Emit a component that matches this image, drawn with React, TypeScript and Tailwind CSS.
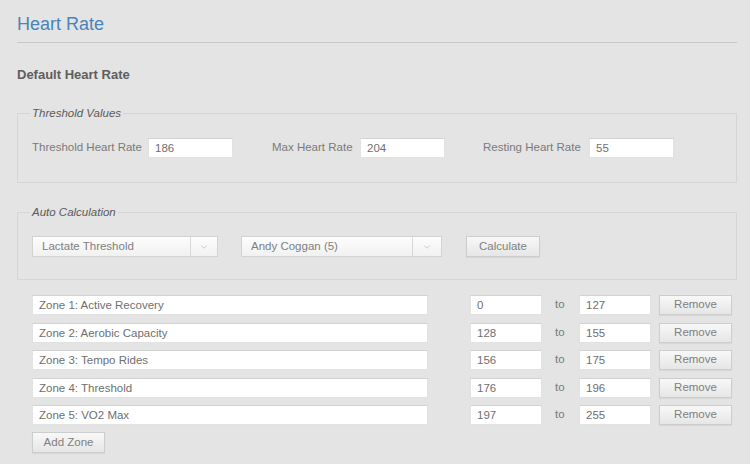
import { ChevronDown } from "lucide-react";

const zones = [
    { name: "Zone 1: Active Recovery", low: "0", high: "127" },
    { name: "Zone 2: Aerobic Capacity", low: "128", high: "155" },
    { name: "Zone 3: Tempo Rides", low: "156", high: "175" },
    { name: "Zone 4: Threshold", low: "176", high: "196" },
    { name: "Zone 5: VO2 Max", low: "197", high: "255" },
];

const inputCls =
    "h-[20px] border border-[#e2e2e2] border-t-[#d2d2d2] bg-white px-[6px] text-[11.5px] text-[#6f6f6f] outline-none";

const buttonCls =
    "flex items-center justify-center border border-[#cdcdcd] bg-gradient-to-b from-[#f8f8f8] to-[#e6e6e6] text-[11.5px] text-[#808080] shadow-[0_1px_1px_rgba(0,0,0,0.05)]";

function Field({ label, value, labelWidth }: { label: string; value: string; labelWidth: string }) {
    return (
        <div className="flex items-center">
            <span className={`${labelWidth} text-[11.5px] text-[#7a7a7a]`}>{label}</span>
            <input className={`${inputCls} w-[85px]`} defaultValue={value} />
        </div>
    );
}

function Select({ value, width, dividerAt }: { value: string; width: string; dividerAt: string }) {
    return (
        <div className={`flex h-[21px] ${width} border border-[#d3d3d3] bg-gradient-to-b from-[#fdfdfd] to-[#f1f1f1]`}>
            <div className={`flex ${dividerAt} items-center border-r border-[#d8d8d8] pl-[9px] text-[11.5px] text-[#808080]`}>
                {value}
            </div>
            <div className="flex flex-1 items-center justify-center">
                <ChevronDown size={10} strokeWidth={1.5} color="#b0b0b0" />
            </div>
        </div>
    );
}

export default function App() {
    return (
        <div
            className="h-[464px] w-full overflow-hidden bg-[#e4e4e4] pr-[13px] pl-[17px]"
            style={{ fontFamily: '"Liberation Sans", Arial, sans-serif' }}
        >
            <div className="border-b border-[#c8c8c8] pt-[13px] pb-[7px]">
                <h1 className="text-[18px] leading-[22px] text-[#4785ba]">Heart Rate</h1>
            </div>

            <h2 className="mt-[24px] text-[13px] leading-[16px] font-bold text-[#5e5e5e]">Default Heart Rate</h2>

            <fieldset className="mt-[23px] w-[720px] border border-[#d5d5d5] px-[14px] pb-[24px]">
                <legend className="-ml-[2px] px-[2px] text-[11.5px] leading-[14px] text-[#5a5a5a] italic">
                    Threshold Values
                </legend>
                <div className="mt-[18px] flex items-center">
                    <Field label="Threshold Heart Rate" value="186" labelWidth="w-[116px]" />
                    <div className="ml-[39px]">
                        <Field label="Max Heart Rate" value="204" labelWidth="w-[88px]" />
                    </div>
                    <div className="ml-[38px]">
                        <Field label="Resting Heart Rate" value="55" labelWidth="w-[106px]" />
                    </div>
                </div>
            </fieldset>

            <fieldset className="mt-[22px] w-[720px] border border-[#d5d5d5] px-[14px] pb-[22px]">
                <legend className="-ml-[2px] px-[2px] text-[11.5px] leading-[14px] text-[#5a5a5a] italic">
                    Auto Calculation
                </legend>
                <div className="mt-[17px] flex items-center">
                    <Select value="Lactate Threshold" width="w-[186px]" dividerAt="w-[158px]" />
                    <div className="ml-[23px]">
                        <Select value="Andy Coggan (5)" width="w-[201px]" dividerAt="w-[171px]" />
                    </div>
                    <button className={`${buttonCls} ml-[24px] h-[21px] w-[74px]`}>Calculate</button>
                </div>
            </fieldset>

            <div className="mt-[15px] flex flex-col gap-[7.5px] pl-[15px]">
                {zones.map((zone) => (
                    <div key={zone.name} className="flex items-center">
                        <input className={`${inputCls} w-[396px]`} defaultValue={zone.name} />
                        <input className={`${inputCls} ml-[42px] w-[72px]`} defaultValue={zone.low} />
                        <span className="w-[37px] pl-[13px] text-[11.5px] text-[#7a7a7a]">to</span>
                        <input className={`${inputCls} w-[72px]`} defaultValue={zone.high} />
                        <button className={`${buttonCls} ml-[8px] h-[20px] w-[73px]`}>Remove</button>
                    </div>
                ))}
            </div>

            <div className="mt-[7px] pl-[15px]">
                <button className={`${buttonCls} h-[21px] w-[73px]`}>Add Zone</button>
            </div>
        </div>
    );
}
